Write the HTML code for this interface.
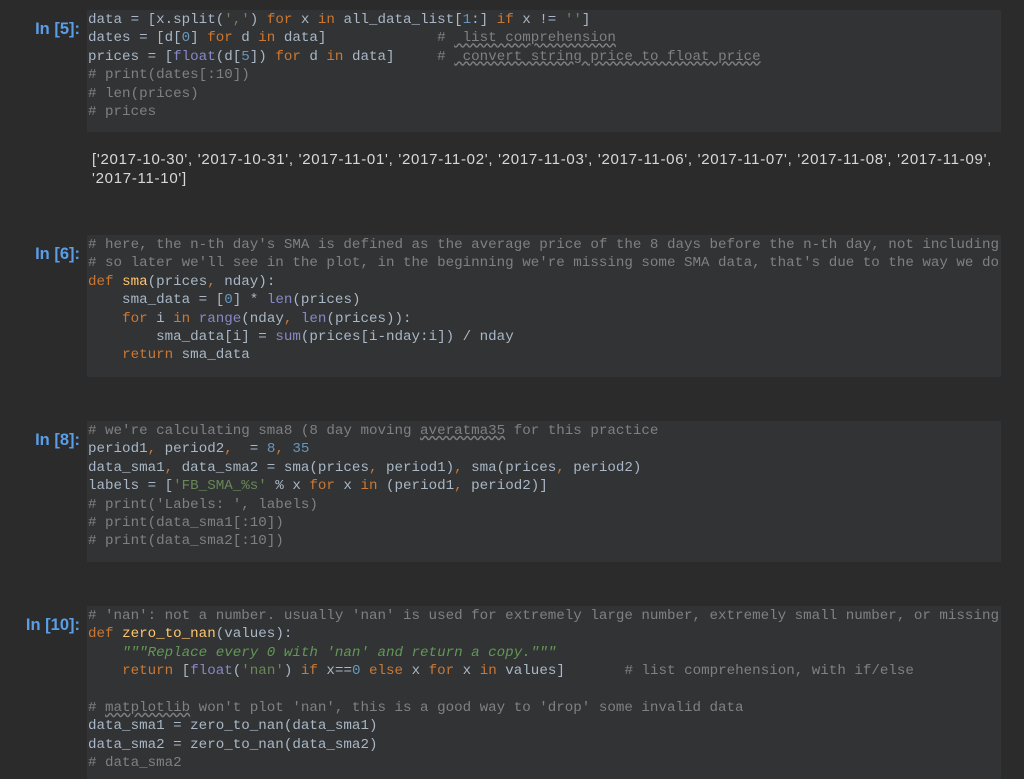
<!DOCTYPE html>
<html><head><style>
body{margin:0;background:#2b2b2b;width:1024px;height:779px;overflow:hidden;position:relative;font-family:"Liberation Mono",monospace;}
.cell{position:absolute;left:87px;width:914px;background:#323335;overflow:hidden;}
.lbl{position:absolute;right:944px;font:bold 16.5px "Liberation Sans",sans-serif;color:#5a9ee8;text-align:right;white-space:nowrap}
pre{margin:0;padding:1px 0 0 1px;font:14.2px/18.4px "Liberation Mono",monospace;color:#a9b7c6;white-space:pre}
.k{color:#cc7832}.c{color:#808080}.s{color:#6a8759}.n{color:#6897bb}.b{color:#8888c6}.f{color:#ffc66d}.d{color:#629755;font-style:italic}
.u{text-decoration:underline wavy #808080}
.out{position:absolute;left:92px;font:15px/18.5px "Liberation Sans",sans-serif;letter-spacing:0.72px;color:#d8d8d8}
</style></head><body>
<div class="lbl" style="top:20px">In [5]:</div>
<div class="cell" style="top:10px;height:122px"><pre>data = [x.split(<span class="s">','</span>) <span class="k">for</span> x <span class="k">in</span> all_data_list[<span class="n">1</span>:] <span class="k">if</span> x != <span class="s">''</span>]
dates = [d[<span class="n">0</span>] <span class="k">for</span> d <span class="k">in</span> data]             <span class="c"># <span class="u"> list comprehension</span></span>
prices = [<span class="b">float</span>(d[<span class="n">5</span>]) <span class="k">for</span> d <span class="k">in</span> data]     <span class="c"># <span class="u"> convert string price to float price</span></span>
<span class="c"># print(dates[:10])</span>
<span class="c"># len(prices)</span>
<span class="c"># prices</span></pre></div>
<div class="out" style="top:151px">['2017-10-30', '2017-10-31', '2017-11-01', '2017-11-02', '2017-11-03', '2017-11-06', '2017-11-07', '2017-11-08', '2017-11-09',<br>'2017-11-10']</div>

<div class="lbl" style="top:245px">In [6]:</div>
<div class="cell" style="top:235px;height:142px"><pre><span class="c"># here, the n-th day's SMA is defined as the average price of the 8 days before the n-th day, not including</span>
<span class="c"># so later we'll see in the plot, in the beginning we're missing some SMA data, that's due to the way we do</span>
<span class="k">def</span> <span class="f">sma</span>(prices<span class="k">,</span> nday):
    sma_data = [<span class="n">0</span>] * <span class="b">len</span>(prices)
    <span class="k">for</span> i <span class="k">in</span> <span class="b">range</span>(nday<span class="k">,</span> <span class="b">len</span>(prices)):
        sma_data[i] = <span class="b">sum</span>(prices[i-nday:i]) / nday
    <span class="k">return</span> sma_data</pre></div>

<div class="lbl" style="top:431px">In [8]:</div>
<div class="cell" style="top:421px;height:141px"><pre><span class="c"># we're calculating sma8 (8 day moving <span class="u">averatma35</span> for this practice</span>
period1<span class="k">,</span> period2<span class="k">,</span>  = <span class="n">8</span><span class="k">,</span> <span class="n">35</span>
data_sma1<span class="k">,</span> data_sma2 = sma(prices<span class="k">,</span> period1)<span class="k">,</span> sma(prices<span class="k">,</span> period2)
labels = [<span class="s">'FB_SMA_%s'</span> % x <span class="k">for</span> x <span class="k">in</span> (period1<span class="k">,</span> period2)]
<span class="c"># print('Labels: ', labels)</span>
<span class="c"># print(data_sma1[:10])</span>
<span class="c"># print(data_sma2[:10])</span></pre></div>

<div class="lbl" style="top:616px">In [10]:</div>
<div class="cell" style="top:606px;height:173px"><pre><span class="c"># 'nan': not a number. usually 'nan' is used for extremely large number, extremely small number, or missing</span>
<span class="k">def</span> <span class="f">zero_to_nan</span>(values):
    <span class="d">"""Replace every 0 with 'nan' and return a copy."""</span>
    <span class="k">return</span> [<span class="b">float</span>(<span class="s">'nan'</span>) <span class="k">if</span> x==<span class="n">0</span> <span class="k">else</span> x <span class="k">for</span> x <span class="k">in</span> values]       <span class="c"># list comprehension, with if/else</span>

<span class="c"># <span class="u">matplotlib</span> won't plot 'nan', this is a good way to 'drop' some invalid data</span>
data_sma1 = zero_to_nan(data_sma1)
data_sma2 = zero_to_nan(data_sma2)
<span class="c"># data_sma2</span></pre></div>
</body></html>
